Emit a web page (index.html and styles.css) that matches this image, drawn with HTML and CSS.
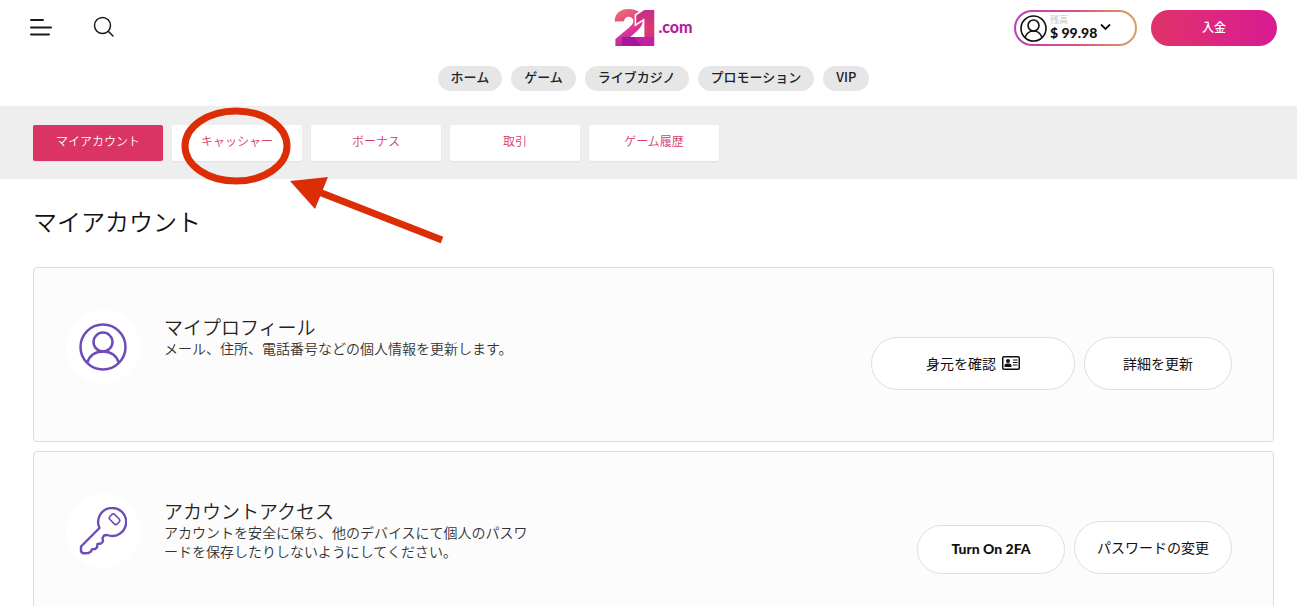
FILE: index.html
```html
<!DOCTYPE html>
<html lang="ja">
<head>
    <meta charset="UTF-8">
    <meta name="viewport" content="width=device-width, initial-scale=1.0">
    <title>マイアカウント</title>
    <link rel="stylesheet" href="styles.css">
</head>
<body>
    <header class="header">
        <div class="topbar">
            <div class="topbar-left">
                <button type="button" class="icon-btn" aria-label="メニュー">
                    <svg width="24" height="20" viewBox="0 0 24 20" fill="none" stroke="#1a1a1a" stroke-width="2" stroke-linecap="round">
                        <path d="M1 3h12M1 10.500h20M1 17.500h18"/>
                    </svg>
                </button>
                <button type="button" class="icon-btn" aria-label="検索">
                    <svg width="22" height="22" viewBox="0 0 22 22" fill="none" stroke="#1a1a1a" stroke-width="1.500" stroke-linecap="round">
                        <circle cx="9.500" cy="9.500" r="8"/>
                        <path d="M15.500 15.500L20 20"/>
                    </svg>
                </button>
            </div>

            <a href="#" class="logo">
                <svg class="logo-mark" width="42" height="38" viewBox="0 0 42 38">
                    <defs>
                        <linearGradient id="logoFill" gradientUnits="userSpaceOnUse" x1="8" y1="0" x2="26" y2="38">
                            <stop offset="0" stop-color="#ec6a6c"/>
                            <stop offset="0.500" stop-color="#dd3a94"/>
                            <stop offset="1" stop-color="#a8189c"/>
                        </linearGradient>
                        <linearGradient id="logoStem" x1="0" y1="0" x2="0" y2="1">
                            <stop offset="0" stop-color="#b3249a"/>
                            <stop offset="0.500" stop-color="#dd3a70"/>
                            <stop offset="1" stop-color="#c41fa0"/>
                        </linearGradient>
                    </defs>
                    <text class="logo-num" x="-1" y="37" fill="url(#logoFill)">2</text>
                    <text class="logo-num logo-one" x="20" y="37" fill="url(#logoStem)">1</text>
                    <path d="M8 28h32v8a1 1 0 0 1-1 1H8z" fill="#c420a4"/>
                    <path d="M8 28h12l8 9H8z" fill="#a5169b"/>
                </svg>
                <span class="logo-com">.com</span>
            </a>

            <div class="topbar-right">
                <button type="button" class="balance">
                    <svg width="27" height="27" viewBox="0 0 27 27" fill="none" stroke="#111" stroke-width="1.600">
                        <circle cx="13.500" cy="13.500" r="12.500"/>
                        <circle cx="13.500" cy="10.500" r="5.500"/>
                        <path d="M5 22.500c1.500-4 4.500-6.500 8.500-6.500s7 2.500 8.500 6.500"/>
                    </svg>
                    <span class="balance-text">
                        <small>残高</small>
                        <strong>$ 99.98</strong>
                    </span>
                    <svg class="chevron" width="11" height="8" viewBox="0 0 11 8" fill="none" stroke="#111" stroke-width="1.800">
                        <path d="M1 1.500l4.500 4.500L10 1.500"/>
                    </svg>
                </button>
                <button type="button" class="deposit">入金</button>
            </div>
        </div>

        <nav class="main-nav">
            <a href="#">ホーム</a>
            <a href="#">ゲーム</a>
            <a href="#">ライブカジノ</a>
            <a href="#">プロモーション</a>
            <a href="#">VIP</a>
        </nav>
    </header>

    <nav class="tabs">
        <a href="#" class="active">マイアカウント</a>
        <a href="#">キャッシャー</a>
        <a href="#">ボーナス</a>
        <a href="#">取引</a>
        <a href="#">ゲーム履歴</a>
    </nav>

    <main class="content">
        <h1>マイアカウント</h1>

        <section class="card">
            <div class="card-icon">
                <svg width="48" height="48" viewBox="0 0 48 48" fill="none" stroke="#6d4bb8" stroke-width="2.500">
                    <circle cx="24" cy="24" r="22.500"/>
                    <circle cx="24" cy="19" r="9.500"/>
                    <path d="M8.500 39.500C10 33 16 28.500 24 28.500s14 4.500 15.500 11"/>
                </svg>
            </div>
            <div class="card-text">
                <h2>マイプロフィール</h2>
                <p>メール、住所、電話番号などの個人情報を更新します。</p>
            </div>
            <div class="card-actions">
                <button type="button" class="btn btn-wide">身元を確認
                    <svg width="18" height="14" viewBox="0 0 18 14">
                        <rect x="0.750" y="0.750" width="16.500" height="12.500" rx="1" fill="none" stroke="#111" stroke-width="1.500"/>
                        <circle cx="6" cy="5" r="2" fill="#111"/>
                        <path d="M2.500 11V9.500C2.500 8 4 7.500 6 7.500s3.500.5 3.500 2V11z" fill="#111"/>
                        <path d="M11 4h4.500M11 6.500h4.500M11 9h4.500" stroke="#111"/>
                    </svg>
                </button>
                <button type="button" class="btn">詳細を更新</button>
            </div>
        </section>

        <section class="card">
            <div class="card-icon">
                <svg width="48" height="48" viewBox="0 0 48 48" fill="none" stroke="#6d4bb8" stroke-width="2.400" stroke-linejoin="round" stroke-linecap="round">
                    <path d="M20.500 21A14 14 0 1 1 28 28l-3 .5-1.500 2.500.5 3.500-2 2-3.500.5-.5 3.500-2 1.500-3 .2-1 2.300-2.500 1.500-5.500.3-2-1.800v-5z"/>
                    <rect x="32" y="7" width="7" height="10.500" rx="2.500" stroke-width="1.600" transform="rotate(-45 35.500 12.200)"/>
                </svg>
            </div>
            <div class="card-text">
                <h2>アカウントアクセス</h2>
                <p>アカウントを安全に保ち、他のデバイスにて個人のパスワードを保存したりしないようにしてください。</p>
            </div>
            <div class="card-actions">
                <button type="button" class="btn btn-latin">Turn On 2FA</button>
                <button type="button" class="btn">パスワードの変更</button>
            </div>
        </section>
    </main>

    <!-- red marker round the cashier tab -->
    <svg class="marker" width="300" height="150" viewBox="0 0 300 150" aria-hidden="true">
        <ellipse cx="66" cy="46" rx="51" ry="35" fill="none" stroke="#dc2e06" stroke-width="7"/>
        <path d="M149 92L272 140" stroke="#dc2e06" stroke-width="7"/>
        <path d="M120 81l38-4-13 32z" fill="#dc2e06"/>
    </svg>
</body>
</html>
```
FILE: styles.css
```css
* {
    box-sizing: border-box;
}

body {
    margin: 0;
    position: relative;
    background: #fff;
    color: #111;
    font-family: "Noto Sans CJK JP", sans-serif;
    font-size: 14px;
}

a {
    text-decoration: none;
    color: inherit;
}

button {
    font-family: inherit;
    cursor: pointer;
}

svg {
    display: block;
    flex-shrink: 0;
}

/* header */
.header {
    padding: 9px 20px 15px 30px;
}

.topbar {
    display: grid;
    grid-template-columns: 1fr auto 1fr;
    align-items: center;
    height: 36px;
}

.topbar-left {
    display: flex;
    align-items: center;
    gap: 39px;
}

.icon-btn {
    padding: 0 0 2px;
    border: none;
    background: none;
}

.logo {
    display: flex;
    align-items: center;
    gap: 2px;
}

.logo-mark {
    overflow: visible;
}

.logo-num {
    font-family: Inter, sans-serif;
    font-weight: 900;
    font-size: 50px;
}

.logo-one {
    stroke: #fff;
    stroke-width: 3px;
    paint-order: stroke;
}

.logo-com {
    color: #b5209b;
    font-family: Lato, sans-serif;
    font-weight: 900;
    font-size: 16px;
    line-height: 18px;
    padding-bottom: 2px;
}

.topbar-right {
    display: flex;
    justify-content: flex-end;
    gap: 14px;
}

.balance {
    display: flex;
    align-items: center;
    gap: 3px;
    width: 123px;
    height: 36px;
    padding: 0 4px;
    border: 2px solid transparent;
    border-radius: 19px;
    background: linear-gradient(#fff, #fff) padding-box,
                linear-gradient(to right, #b93fc0, #d8508a, #d9a05c) border-box;
    color: #111;
}

.balance-text {
    display: flex;
    flex-direction: column;
    padding-bottom: 2px;
    text-align: left;
}

.balance-text small {
    color: #c4c4c4;
    font-size: 9px;
    line-height: 10px;
}

.balance-text strong {
    font-family: Lato, sans-serif;
    font-weight: 900;
    font-size: 14px;
    line-height: 15px;
    white-space: nowrap;
}

.chevron {
    margin-bottom: 3px;
}

.deposit {
    width: 126px;
    height: 36px;
    padding: 0 0 4px;
    border: none;
    border-radius: 19px;
    background: linear-gradient(to right, #e0336a, #d81b93);
    color: #fff;
    font-size: 12px;
    font-weight: 500;
}

.main-nav {
    display: flex;
    justify-content: center;
    gap: 9px;
    margin-top: 21px;
}

.main-nav a {
    padding: 0 13px 4px;
    border-radius: 13px;
    background: #e6e6e6;
    color: #222;
    font-size: 13px;
    font-weight: 500;
    line-height: 21px;
}

/* account tabs */
.tabs {
    display: flex;
    gap: 9px;
    padding: 19px 33px 18px;
    background: #eee;
}

.tabs a {
    width: 130px;
    height: 36px;
    border-radius: 2px;
    background: #fff;
    box-shadow: 0 1px 2px rgba(0, 0, 0, 0.06);
    color: #d63d68;
    font-size: 12px;
    font-weight: 350;
    line-height: 31px;
    text-align: center;
}

.tabs a.active {
    background: #d93463;
    color: #fff;
}

/* content */
.content {
    padding: 0 23px 10px 33px;
}

h1 {
    margin: 0;
    padding: 24px 0 28px;
    font-size: 24px;
    font-weight: 350;
    line-height: 36px;
}

.card {
    display: flex;
    margin-bottom: 9px;
    padding: 0 41px 51px 32px;
    border: 1px solid #dcdcdc;
    border-radius: 4px;
    background: #fcfcfc;
}

.card-icon {
    display: flex;
    align-items: center;
    justify-content: center;
    width: 74px;
    height: 74px;
    margin-top: 42px;
    border-radius: 50%;
    background: #fff;
}

.card-text {
    max-width: 390px;
    margin: 47px auto 0 24px;
}

.card-text h2 {
    margin: 0;
    color: #222;
    font-size: 19px;
    font-weight: 350;
    line-height: 24px;
}

.card-text p {
    max-width: 366px;
    margin: 0;
    color: #333;
    font-weight: 350;
    line-height: 19px;
}

.card-actions {
    display: flex;
    align-items: flex-end;
    gap: 9px;
    height: 53px;
    margin-top: 69px;
}

.btn {
    display: flex;
    align-items: center;
    justify-content: center;
    gap: 6px;
    min-width: 148px;
    height: 53px;
    padding: 0 22px 2px;
    border: 1px solid #dedede;
    border-radius: 27px;
    background: #fff;
    color: #111;
    font-size: 14px;
    white-space: nowrap;
}

.btn-wide {
    padding: 0 54px 2px;
}

.btn-latin {
    height: 49px;
    font-family: Lato, sans-serif;
    font-size: 14px;
    font-weight: 900;
}

/* lies over the tabs and the heading */
.marker {
    position: absolute;
    top: 100px;
    left: 170px;
    pointer-events: none;
}
```
